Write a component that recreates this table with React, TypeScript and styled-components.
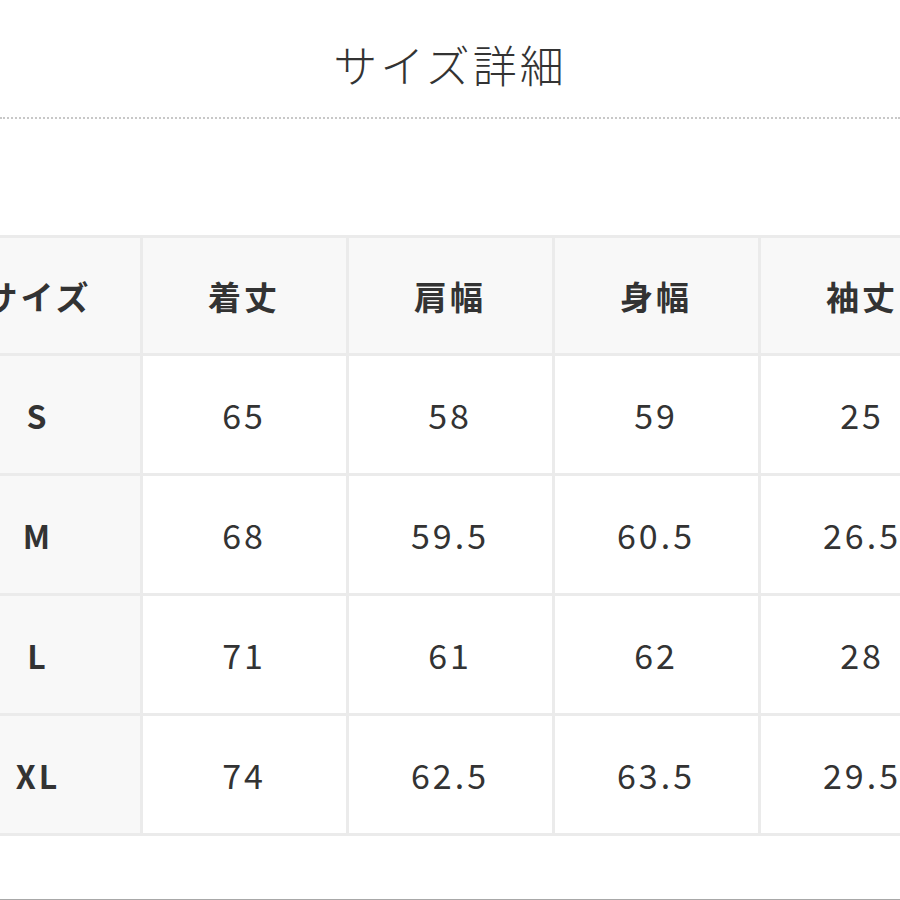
import styled, { createGlobalStyle } from "styled-components";

const GlobalStyle = createGlobalStyle`
    html, body {
        margin: 0;
        padding: 0;
        background: #ffffff;
    }

    body {
        font-family: "Noto Sans CJK JP", "Noto Sans", sans-serif;
        color: #333333;
    }
`;

const Page = styled.div`
    display: flex;
    flex-direction: column;
    width: 900px;
    height: 900px;
    overflow: hidden;
    box-sizing: border-box;
    border-bottom: 1px solid #a8a8a8;
`;

const TitleBar = styled.div`
    display: flex;
    align-items: center;
    justify-content: center;
    height: 117px;
    border-bottom: 2px dotted #c8c8c8;
`;

const Title = styled.h2`
    margin: 0;
    padding-top: 10px;
    font-size: 44px;
    font-weight: 300;
    letter-spacing: 3px;
    color: #333333;
`;

const TableWrap = styled.div`
    display: flex;
    justify-content: center;
    margin-top: 116px;
`;

const SizeTable = styled.table`
    flex: 0 0 auto;
    width: 1033px;
    table-layout: fixed;
    border-collapse: collapse;
`;

const HeadCell = styled.th`
    height: 115px;
    padding: 0;
    border: 3px solid #ebebeb;
    background: #f8f8f8;
    font-size: 33px;
    font-weight: 700;
    letter-spacing: 3px;
    color: #333333;
    text-align: center;
    vertical-align: middle;
`;

const Cell = styled.td<{ $label?: boolean }>`
    height: 117px;
    padding: 0;
    border: 3px solid #ebebeb;
    background: ${(props) => (props.$label ? "#f8f8f8" : "#ffffff")};
    font-size: ${(props) => (props.$label ? "32px" : "34px")};
    font-weight: ${(props) => (props.$label ? 700 : 400)};
    letter-spacing: 3px;
    color: #333333;
    text-align: center;
    vertical-align: middle;
`;

const headers = ["サイズ", "着丈", "肩幅", "身幅", "袖丈"];

const rows = [
    ["S", "65", "58", "59", "25"],
    ["M", "68", "59.5", "60.5", "26.5"],
    ["L", "71", "61", "62", "28"],
    ["XL", "74", "62.5", "63.5", "29.5"],
];

function App() {
    return (
        <>
            <GlobalStyle />
            <Page>
                <TitleBar>
                    <Title>サイズ詳細</Title>
                </TitleBar>
                <TableWrap>
                    <SizeTable>
                        <thead>
                            <tr>
                                {headers.map((h) => (
                                    <HeadCell key={h}>{h}</HeadCell>
                                ))}
                            </tr>
                        </thead>
                        <tbody>
                            {rows.map((row) => (
                                <tr key={row[0]}>
                                    {row.map((value, i) => (
                                        <Cell key={i} $label={i === 0}>
                                            {value}
                                        </Cell>
                                    ))}
                                </tr>
                            ))}
                        </tbody>
                    </SizeTable>
                </TableWrap>
            </Page>
        </>
    );
}

export default App;
